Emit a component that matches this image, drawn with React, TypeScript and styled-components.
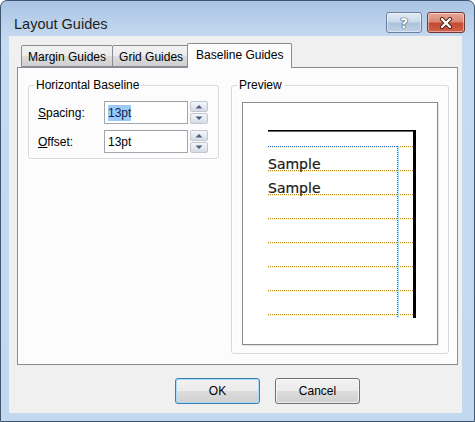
import React from 'react';
import styled, { createGlobalStyle } from 'styled-components';

/* ───────────── globals ───────────── */

const GlobalStyle = createGlobalStyle`
	html, body {
		margin: 0;
		padding: 0;
		background: #ffffff;
	}
	body {
		font-family: "Liberation Sans", Arial, sans-serif;
		font-size: 12px;
		color: #000;
	}
	* { box-sizing: border-box; }
`;

/* ───────────── window frame ───────────── */

const Window = styled.div`
	width: 475px;
	height: 422px;
	display: flex;
	flex-direction: column;
	border: 1px solid #3f5570;
	border-radius: 7px 7px 0 0;
	background: linear-gradient(180deg, #a9c3e3 0px, #bdd3ec 24px, #c6dbf1 40px, #c2d8ef 100%);
	overflow: hidden;
`;

const TitleBar = styled.div`
	height: 35px;
	display: flex;
	align-items: center;
	padding: 10px 9px 0 13px;
`;

const Title = styled.div`
	flex: 1;
	font-size: 14.5px;
	color: #1e1e1e;
`;

const CaptionButtons = styled.div`
	display: flex;
	gap: 5px;
	align-self: flex-start;
	margin-top: 1px;
`;

const CaptionButton = styled.div<{ $close?: boolean }>`
	width: ${({ $close }) => ($close ? 38 : 36)}px;
	height: 21px;
	display: flex;
	align-items: center;
	justify-content: center;
	border-radius: 3px;
	border: 1px solid ${({ $close }) => ($close ? '#6e3a31' : '#6b819e')};
	background: ${({ $close }) =>
		$close
			? 'linear-gradient(180deg, #e9a899 0%, #dc8873 45%, #c44a33 55%, #d2614a 100%)'
			: 'linear-gradient(180deg, #e2ebf6 0%, #cbdaeb 45%, #aec3dc 55%, #bfd1e6 100%)'};
	box-shadow: inset 0 0 0 1px rgba(255, 255, 255, 0.45);
`;

const HelpGlyph = styled.span`
	font-family: "DejaVu Sans", sans-serif;
	font-weight: bold;
	font-size: 14px;
	color: #ffffff;
	text-shadow: 0 0 1px #2f3d52, 0 0 1px #2f3d52, 0 0 1px #2f3d52;
	line-height: 1;
`;

const Client = styled.div`
	flex: 1;
	margin: 0 12px 8px 8px;
	background: #f0f0f0;
	display: flex;
	flex-direction: column;
	padding: 7px 4px 0 8px;
`;

/* ───────────── tabs ───────────── */

const TabRow = styled.div`
	display: flex;
	align-items: flex-end;
	height: 24px;
	padding-left: 4px;
`;

const Tab = styled.div<{ $active?: boolean }>`
	height: ${({ $active }) => ($active ? 25 : 22)}px;
	padding: ${({ $active }) => ($active ? '4px 8px 0' : '4px 6px 0')};
	margin: ${({ $active }) => ($active ? '0 -2px -1px -2px' : '0 -1px 0 0')};
	border: 1px solid #898c95;
	border-bottom: ${({ $active }) => ($active ? 'none' : '1px solid #898c95')};
	border-radius: 2px 2px 0 0;
	background: ${({ $active }) =>
		$active ? '#fcfcfc' : 'linear-gradient(180deg, #f2f2f2 0%, #ebebeb 50%, #dddddd 51%, #cfcfcf 100%)'};
	position: relative;
	z-index: ${({ $active }) => ($active ? 2 : 1)};
	white-space: nowrap;
	color: #000;
`;

const Panel = styled.div`
	width: 441px;
	height: 298px;
	border: 1px solid #898c95;
	background: #fcfcfc;
	display: flex;
	align-items: flex-start;
	gap: 12px;
	padding: 17px 0 0 10px;
`;

/* ───────────── group boxes ───────────── */

const Group = styled.div<{ $w: number; $h: number }>`
	position: relative;
	width: ${({ $w }) => $w}px;
	height: ${({ $h }) => $h}px;
	border: 1px solid #d5d9de;
	border-radius: 3px;
	box-shadow: inset 1px 1px 0 #ffffff, 1px 1px 0 #ffffff;
`;

const Legend = styled.span`
	position: absolute;
	left: 5px;
	top: -8px;
	padding: 0 2px;
	line-height: 14px;
	background: #fcfcfc;
	color: #000;
`;

const Fields = styled.div`
	display: flex;
	flex-direction: column;
	gap: 6px;
	padding: 15px 0 0 9px;
`;

const FieldRow = styled.div`
	display: flex;
	align-items: center;
	height: 23px;
`;

const Label = styled.label`
	width: 66px;
	color: #000;
	u { text-decoration: underline; }
`;

const TextBox = styled.div`
	width: 84px;
	height: 23px;
	border: 1px solid #a3a7ad;
	border-top-color: #9ba0a7;
	background: #ffffff;
	display: flex;
	align-items: center;
	padding-left: 3px;
`;

const Selected = styled.span`
	background: #9ccaf6;
	color: #0c2350;
	padding: 1px 0;
	line-height: 14px;
`;

const Spinner = styled.div`
	display: flex;
	flex-direction: column;
	gap: 1px;
	margin-left: 2px;
`;

const SpinButton = styled.div`
	width: 18px;
	height: 11px;
	border: 1px solid #bfc6d0;
	border-radius: 2px;
	background: linear-gradient(180deg, #f4f6f9 0%, #e6eaf0 50%, #d6dce5 100%);
	display: flex;
	align-items: center;
	justify-content: center;
`;

const PreviewBox = styled.div`
	margin: 16px 0 0 10px;
	width: 196px;
	height: 243px;
	border: 1px solid #8b8b8b;
	background: #ffffff;
	box-shadow: 1px 1px 0 #e4e4e4;
	svg { display: block; }
`;

/* ───────────── bottom buttons ───────────── */

const ButtonRow = styled.div`
	display: flex;
	gap: 15px;
	margin-top: 13px;
	padding-left: 158px;
`;

const PushButton = styled.div<{ $default?: boolean }>`
	width: 85px;
	height: 26px;
	display: flex;
	align-items: center;
	justify-content: center;
	border-radius: 3px;
	border: 1px solid ${({ $default }) => ($default ? '#3c7fb1' : '#707070')};
	background: linear-gradient(180deg, #f2f2f2 0%, #ebebeb 50%, #dddddd 51%, #cfcfcf 100%);
	box-shadow: inset 0 0 0 1px ${({ $default }) => ($default ? '#a9dcf6' : 'rgba(255,255,255,0.7)')};
	color: #000;
`;

/* ───────────── pieces ───────────── */

const Arrow = ({ up }: { up?: boolean }) => (
	<svg width="8" height="5" viewBox="0 0 8 5">
		<path d={up ? 'M0.5 4.5 L4 1 L7.5 4.5 Z' : 'M0.5 0.5 L4 4 L7.5 0.5 Z'} fill="#4a5f80" />
	</svg>
);

const Spin = () => (
	<Spinner>
		<SpinButton>
			<Arrow up />
		</SpinButton>
		<SpinButton>
			<Arrow />
		</SpinButton>
	</Spinner>
);

const CloseGlyph = () => (
	<svg width="14" height="12" viewBox="0 0 14 12">
		<path d="M3 2 L11 10 M11 2 L3 10" stroke="#4b1e17" strokeWidth="4.2" strokeLinecap="round" />
		<path d="M3 2 L11 10 M11 2 L3 10" stroke="#ffffff" strokeWidth="2.4" strokeLinecap="round" />
	</svg>
);

const baselines = [43, 67, 91, 115, 139, 163, 187, 211];

const PagePreview = () => (
	<svg width="194" height="241" viewBox="0 0 194 241">
		{/* baseline guides */}
		{baselines.map((y) => (
			<g key={y}>
				<line x1="25" y1={y + 1.5} x2="170" y2={y + 1.5} stroke="#f6ecbd" strokeDasharray="1 1" />
				<line x1="25" y1={y + 0.5} x2="170" y2={y + 0.5} stroke="#c0892a" strokeDasharray="1 1" />
			</g>
		))}
		{/* margin guides */}
		<line x1="25" y1="43.5" x2="154" y2="43.5" stroke="#1d5fd6" strokeDasharray="1 1" />
		<line x1="155.5" y1="43" x2="155.5" y2="215" stroke="#a9e3fb" />
		<line x1="154.5" y1="43" x2="154.5" y2="215" stroke="#1d5fd6" strokeDasharray="1 1" />
		{/* page edges */}
		<rect x="25" y="27" width="148" height="1.6" fill="#000" />
		<rect x="170" y="27" width="3" height="188" fill="#000" />
		{/* sample text */}
		<text x="25" y="66" fontFamily="'DejaVu Sans', sans-serif" fontSize="14" fill="#1a1a1a" stroke="#1a1a1a" strokeWidth="0.2">
			Sample
		</text>
		<text x="25" y="90" fontFamily="'DejaVu Sans', sans-serif" fontSize="14" fill="#1a1a1a" stroke="#1a1a1a" strokeWidth="0.2">
			Sample
		</text>
	</svg>
);

/* ───────────── component ───────────── */

export default function App() {
	return (
		<>
			<GlobalStyle />
			<Window>
				<TitleBar>
					<Title>Layout Guides</Title>
					<CaptionButtons>
						<CaptionButton>
							<HelpGlyph>?</HelpGlyph>
						</CaptionButton>
						<CaptionButton $close>
							<CloseGlyph />
						</CaptionButton>
					</CaptionButtons>
				</TitleBar>

				<Client>
					<TabRow>
						<Tab>Margin Guides</Tab>
						<Tab>Grid Guides</Tab>
						<Tab $active>Baseline Guides</Tab>
					</TabRow>

					<Panel>
						<Group $w={191} $h={74}>
							<Legend>Horizontal Baseline</Legend>
							<Fields>
								<FieldRow>
									<Label>
										<u>S</u>pacing:
									</Label>
									<TextBox>
										<Selected>13pt</Selected>
									</TextBox>
									<Spin />
								</FieldRow>
								<FieldRow>
									<Label>
										<u>O</u>ffset:
									</Label>
									<TextBox>13pt</TextBox>
									<Spin />
								</FieldRow>
							</Fields>
						</Group>

						<Group $w={218} $h={269}>
							<Legend>Preview</Legend>
							<PreviewBox>
								<PagePreview />
							</PreviewBox>
						</Group>
					</Panel>

					<ButtonRow>
						<PushButton $default>OK</PushButton>
						<PushButton>Cancel</PushButton>
					</ButtonRow>
				</Client>
			</Window>
		</>
	);
}
